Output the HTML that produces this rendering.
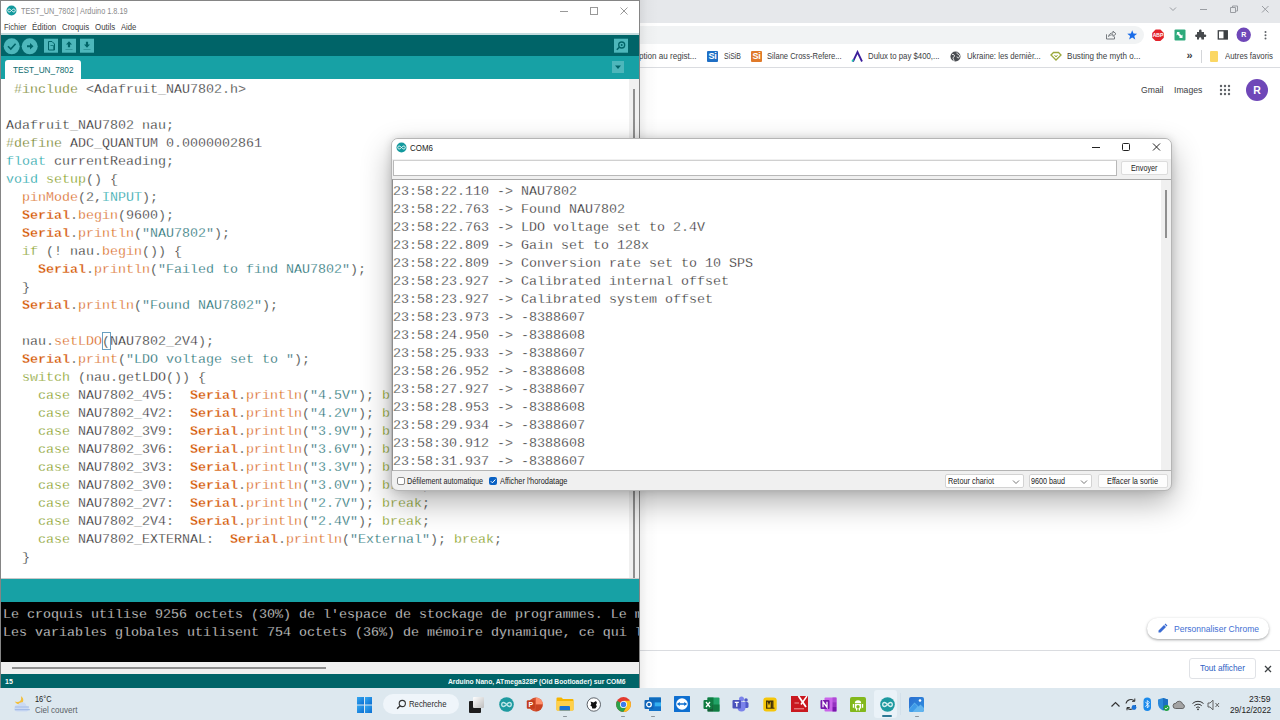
<!DOCTYPE html>
<html>
<head>
<meta charset="utf-8">
<title>Arduino IDE - Serial Monitor COM6</title>
<style>
*{box-sizing:border-box;margin:0;padding:0}
html,body{width:1280px;height:720px;overflow:hidden;background:#fff;font-family:"Liberation Sans",sans-serif;}
.abs{position:absolute}
#root{position:relative;width:1280px;height:720px;overflow:hidden;background:#fff}
/* chrome */
#chrome{left:0;top:0;width:1280px;height:688px;background:#fff}
#ctabs{left:0;top:0;width:1280px;height:23px;background:#e6e8eb}
#ctool{left:0;top:23px;width:1280px;height:22px;background:#fff}
#omni{left:100px;top:26px;width:1044px;height:18px;border-radius:9px;background:#f1f3f4}
#cbm{left:0;top:45px;width:1280px;height:23px;background:#fff;border-bottom:1px solid #dadce0}
.bm{position:absolute;top:50.500px;font-size:8.700px;color:#3c4043;white-space:nowrap}
/* arduino */
#ard{left:0;top:0;width:640px;height:688px;overflow:hidden;background:#fff;border-left:1px solid #858585;border-top:1px solid #858585;border-right:1px solid #858585}
.mono{font-family:"Liberation Mono",monospace;font-size:13.33px;line-height:18px;white-space:pre}
#code{left:5px;top:80px;color:#141414;-webkit-text-stroke:0.3px #fff}
.k1{color:#d35400}.k1b{color:#d35400;font-weight:bold}.k2{color:#00979c}.k3{color:#728e00}.k4{color:#728e00}.st{color:#005c5f}.pp{color:#5e6d03}
/* com */
#com{left:391px;top:138px;width:781px;height:353px;background:#f0f0f0;border:1px solid #b5b5b5;border-radius:7px;box-shadow:0 12px 30px rgba(0,0,0,0.30),0 0 8px rgba(0,0,0,0.14);overflow:hidden}
#comlog{left:1px;top:44px;color:#141414;-webkit-text-stroke:0.3px #fff}
/* taskbar */
#task{left:0;top:688px;width:1280px;height:32px;background:#dde8ef}
</style>
</head>
<body>
<div id="root">

<!-- CHROME -->
<div id="chrome" class="abs">
  <div id="ctabs" class="abs"></div>
  <div id="ctool" class="abs"></div>
  <div id="omni" class="abs"></div>
  <div id="cbm" class="abs"></div>
  <!-- window controls -->
  <svg class="abs" style="left:1160px;top:2px" width="120" height="16" viewBox="0 0 120 16"><g stroke="#9a9da2" stroke-width="1" fill="none"><path d="M10 5.500l3 3 3-3"/><path d="M40 7.500h7"/><path d="M70.500 5.500h5v5h-5z M72.500 5.500v-1.500h5v5h-2"/><path d="M102 4l6.500 6.500m0-6.500l-6.500 6.500"/></g></svg>
  <!-- toolbar icons -->
  <svg class="abs" style="left:1100px;top:25px" width="180" height="20" viewBox="0 0 180 20">
    <g fill="none" stroke="#6a6e73" stroke-width="0.900"><path d="M6.500 9.300v4.700h8v-2.500"/><path d="M8.500 11.500c.5-2.500 2-3.500 4.500-3.500v-1.800l3 2.600-3 2.600v-1.700c-2 0-3.200.6-4.500 1.800z"/></g>
    <path d="M32.20 5.20L33.49 8.62L37.15 8.79L34.29 11.08L35.26 14.61L32.20 12.60L29.14 14.61L30.11 11.08L27.25 8.79L30.91 8.62z" fill="#1a6ce8"/>
    <path d="M55.600 4.500h4.800l3.400 3.400v4.800l-3.400 3.400h-4.800l-3.400-3.400v-4.800z" fill="#e3232c"/>
    <text x="58" y="12.300" font-family="Liberation Sans" font-size="5" font-weight="bold" fill="#fff" text-anchor="middle">ABP</text>
    <rect x="74.500" y="4.500" width="11" height="11" rx="1" fill="#2eaa7c"/>
    <path d="M77 7h3l-1 1 2.500 2.500 1-1v3.500h-3.500l1-1-2.500-2.500-1 1z" fill="#fff"/>
    <path transform="translate(0.500,-1)" d="M96.500 8h2v-1.200a1.300 1.300 0 0 1 2.600 0v1.200h2.400v2.400h1a1.300 1.300 0 0 1 0 2.600h-1v2.500h-2.600v-1a1.200 1.200 0 0 0-2.400 0v1h-2v-2.500h-.6a1.300 1.300 0 0 1 0-2.600h.6z" fill="#46494d"/>
    <rect x="118.300" y="5.800" width="9" height="8.200" fill="none" stroke="#3c4043" stroke-width="1.300"/><rect x="123.500" y="5.800" width="3.800" height="8.200" fill="#3c4043"/>
    <circle cx="143.700" cy="9.800" r="7.200" fill="#6f47b8"/>
    <text x="143.700" y="12.300" font-family="Liberation Sans" font-size="7" font-weight="bold" fill="#fff" text-anchor="middle">R</text>
    <g fill="#5f6368"><circle cx="165.500" cy="7" r="1"/><circle cx="165.500" cy="10.300" r="1"/><circle cx="165.500" cy="13.600" r="1"/></g>
  </svg>
  <!-- bookmarks -->
  <div class="bm" style="transform-origin:0 50%;transform:scaleX(0.9300);left:638.5px">ption au regist...</div>
  <div class="abs" style="left:707px;top:51px;width:11px;height:11px;background:#1f6fc5;border-radius:1px;color:#fff;font-size:9px;font-weight:bold;line-height:11px;text-align:center;letter-spacing:-0.3px">Si</div>
  <div class="bm" style="transform-origin:0 50%;transform:scaleX(0.8000);left:723.5px">SiSiB</div>
  <div class="abs" style="left:751px;top:51px;width:11px;height:11px;background:#e07a2a;border-radius:1px;color:#fff;font-size:9px;font-weight:bold;line-height:11px;text-align:center;letter-spacing:-0.3px">Si</div>
  <div class="bm" style="transform-origin:0 50%;transform:scaleX(0.8717);left:767px">Silane Cross-Refere...</div>
  <svg class="abs" style="left:851px;top:50px" width="13" height="13" viewBox="0 0 13 13"><path d="M2 11.500l4.500-9.500 4.500 9.500" fill="none" stroke="#3b1e9a" stroke-width="1.800"/><path d="M1 11.500l1.500-2" stroke="#21c9b0" stroke-width="1.600"/></svg>
  <div class="bm" style="transform-origin:0 50%;transform:scaleX(0.8973);left:868.4px">Dulux to pay $400,...</div>
  <svg class="abs" style="left:950px;top:51px" width="11" height="11" viewBox="0 0 11 11"><circle cx="5.500" cy="5.500" r="5" fill="#4a4d51"/><path d="M2 3.500c1.500-.5 2.500.5 2.500 1.500s-1.500 1-1.500 2 1 1.500 1 3M7 1.500c-.5 1 .5 1.500 1.500 2s1.500 2 .5 3-2 0-2-1" stroke="#fff" stroke-width="0.900" fill="none"/></svg>
  <div class="bm" style="transform-origin:0 50%;transform:scaleX(0.8965);left:966.8px">Ukraine: les dernièr...</div>
  <svg class="abs" style="left:1050px;top:51px" width="12" height="11" viewBox="0 0 12 11"><path d="M1 4l2.500-2.500h5l2.500 2.500-5 5z" fill="none" stroke="#9aa83a" stroke-width="1.300"/><path d="M4.500 4l1.500 2 1.500-2" fill="none" stroke="#9aa83a" stroke-width="1"/></svg>
  <div class="bm" style="transform-origin:0 50%;transform:scaleX(0.9280);left:1067px">Busting the myth o...</div>
  <div class="abs" style="left:1186.500px;top:48.500px;font-size:11px;color:#3c4043;font-weight:bold">»</div>
  <div class="abs" style="left:1201px;top:50px;width:1px;height:13px;background:#d4d6d9"></div>
  <div class="abs" style="left:1210px;top:51px;width:8px;height:11px;background:#fbd764;border-radius:1px"></div>
  <div class="bm" style="transform-origin:0 50%;transform:scaleX(0.9038);left:1225px">Autres favoris</div>
  <!-- page -->
  <div class="abs" style="transform-origin:0 50%;transform:scaleX(0.9190);left:1141.200px;top:84px;font-size:9.400px;color:#3c4043;white-space:nowrap">Gmail</div>
  <div class="abs" style="transform-origin:0 50%;transform:scaleX(0.9203);left:1173.700px;top:84px;font-size:9.400px;color:#3c4043;white-space:nowrap">Images</div>
  <svg class="abs" style="left:1219px;top:84px" width="12" height="12" viewBox="0 0 12 12"><g fill="#5f6368"><circle cx="2" cy="2" r="1.200"/><circle cx="6" cy="2" r="1.200"/><circle cx="10" cy="2" r="1.200"/><circle cx="2" cy="6" r="1.200"/><circle cx="6" cy="6" r="1.200"/><circle cx="10" cy="6" r="1.200"/><circle cx="2" cy="10" r="1.200"/><circle cx="6" cy="10" r="1.200"/><circle cx="10" cy="10" r="1.200"/></g></svg>
  <div class="abs" style="left:1246px;top:79px;width:22px;height:22px;border-radius:11px;background:#6f47b8;color:#fff;font-size:10.500px;font-weight:bold;text-align:center;line-height:22px">R</div>
  <!-- customize -->
  <div class="abs" style="left:1147px;top:618px;width:122px;height:21px;border-radius:11px;background:#fff;box-shadow:0 1px 3px rgba(60,64,67,0.35),0 1px 2px rgba(60,64,67,0.15)"></div>
  <svg class="abs" style="left:1157px;top:623px" width="11" height="11" viewBox="0 0 11 11"><path d="M1.500 9.500v-2l5.500-5.500 2 2-5.500 5.500z M7.600 1.400l.8-.8 2 2-.8.800z" fill="#3b6cd4"/></svg>
  <div class="abs" style="transform-origin:0 50%;transform:scaleX(0.9299);left:1173.700px;top:623.500px;font-size:9.200px;color:#3f6fd3;white-space:nowrap">Personnaliser Chrome</div>
  <!-- download bar -->
  <div class="abs" style="left:0;top:650px;width:1280px;height:1px;background:#dadce0"></div>
  <div class="abs" style="left:1189px;top:658px;width:67px;height:21px;border:1px solid #e0e2e6;border-radius:3px"></div><div class="abs" style="transform-origin:0 50%;transform:scaleX(0.9020);left:1200px;top:663px;font-size:9.200px;color:#2f62c4;white-space:nowrap">Tout afficher</div>
  <svg class="abs" style="left:1263px;top:664px" width="10" height="10" viewBox="0 0 10 10"><path d="M2 2l6 6m0-6l-6 6" stroke="#3c4043" stroke-width="1.300" fill="none"/></svg>
  <!-- left shadow from arduino window -->
  <div class="abs" style="left:640px;top:0;width:18px;height:688px;background:linear-gradient(to right,rgba(0,0,0,0.07),rgba(0,0,0,0.02) 40%,rgba(0,0,0,0))"></div>
</div>

<!-- ARDUINO -->
<div id="ard" class="abs">
  <!-- title -->
  <svg class="abs" style="left:5px;top:4px" width="11" height="11" viewBox="0 0 11 11"><circle cx="5.5" cy="5.5" r="5" fill="#12999d"/><path d="M1.8 5.5c0-1 .7-1.5 1.4-1.5 1.5 0 3.1 3 4.6 3 .7 0 1.4-.5 1.4-1.5S8.500 4 7.800 4C6.300 4 4.700 7 3.200 7 2.500 7 1.800 6.500 1.800 5.500z" fill="none" stroke="#fff" stroke-width="0.9"/></svg>
  <div class="abs" style="transform-origin:0 50%;transform:scaleX(0.8104);left:20.300px;top:4.500px;font-size:9px;color:#8a8a8a;white-space:nowrap">TEST_UN_7802 | Arduino 1.8.19</div>
  <!-- window controls -->
  <svg class="abs" style="left:555px;top:4px" width="80" height="12" viewBox="0 0 80 12"><g stroke="#999" stroke-width="1" fill="none"><path d="M4 6.500h8"/><rect x="34.500" y="2.500" width="7" height="7"/><path d="M64.500 2.500l7 7m0-7l-7 7"/></g></svg>
  <!-- menu -->
  <div class="abs" style="transform-origin:0 50%;transform:scaleX(0.8366);left:2.8px;top:20.500px;font-size:9px;color:#404040;white-space:nowrap">Fichier</div><div class="abs" style="transform-origin:0 50%;transform:scaleX(0.8826);left:31.0px;top:20.500px;font-size:9px;color:#404040;white-space:nowrap">Édition</div><div class="abs" style="transform-origin:0 50%;transform:scaleX(0.8770);left:61.0px;top:20.500px;font-size:9px;color:#404040;white-space:nowrap">Croquis</div><div class="abs" style="transform-origin:0 50%;transform:scaleX(0.8777);left:94.0px;top:20.500px;font-size:9px;color:#404040;white-space:nowrap">Outils</div><div class="abs" style="transform-origin:0 50%;transform:scaleX(0.8493);left:120.0px;top:20.500px;font-size:9px;color:#404040;white-space:nowrap">Aide</div>
  <div class="abs" style="left:0;top:32px;width:638px;height:2px;background:#c4dcde"></div>
  <!-- toolbar -->
  <div class="abs" style="left:0;top:34px;width:638px;height:22px;background:#006468"></div>
  <div class="abs" style="left:0;top:55px;width:638px;height:23px;background:#17a1a5"></div>
  <!-- toolbar buttons -->
  <svg class="abs" style="left:0;top:34px" width="638" height="22" viewBox="0 0 638 22">
    <g fill="#4db7bb">
      <circle cx="10.700" cy="11.300" r="8"/><circle cx="28.700" cy="11.300" r="8"/>
      <rect x="43" y="3.700" width="14" height="14"/><rect x="61" y="3.700" width="14" height="14"/><rect x="79" y="3.700" width="14" height="14"/>
      <rect x="613" y="3.700" width="14" height="14" fill="#4db7bb"/>
    </g>
    <g fill="none" stroke="#006468" stroke-width="1.600">
      <path d="M7 11.300l2.800 2.800 4.800-5.400"/>
    </g>
    <g fill="#006468">
      <path d="M26 10.300h3v-2.300l3.500 3.300-3.500 3.300v-2.300h-3z"/>
      <path d="M68 6.300l3 3.300h-1.900v2.700h-2.200v-2.700h-1.900z"/><rect x="64.500" y="14.200" width="7" height="0.700" opacity="0.500"/>
      <path d="M86 12.800l3-3.300h-1.900v-2.700h-2.200v2.700h-1.900z"/><rect x="82.500" y="14.200" width="7" height="0.700" opacity="0.500"/>
    </g>
    <g fill="none" stroke="#006468" stroke-width="1">
      <path d="M47.500 6.500h3.500l2.500 2.500v6h-6z"/><path d="M49.500 10.500h3v4.500" opacity="0.700"/>
      <circle cx="620.700" cy="10" r="3" stroke-width="1.300"/><path d="M618.300 12.300l-2.500 2.500" stroke-width="1.600"/>
    </g>
    <circle cx="620.700" cy="10" r="1" fill="#006468"/>
  </svg>
  <!-- tab -->
  <div class="abs" style="left:4px;top:59px;width:76px;height:19px;background:#fff;border-radius:3px 3px 0 0"></div>
  <div class="abs" style="transform-origin:0 50%;transform:scaleX(0.9160);left:12px;top:64px;font-size:9px;color:#0d6b6e;white-space:nowrap">TEST_UN_7802</div>
  <div class="abs" style="left:611px;top:60px;width:12px;height:12px;background:#4db7bb"></div>
  <svg class="abs" style="left:611px;top:60px" width="12" height="12"><path d="M3 4.500h6l-3 3.500z" fill="#006468"/></svg>
  <!-- editor scrollbar -->
  <div class="abs" style="left:628px;top:78px;width:10px;height:500px;background:#f0f0f0"></div>
  <div class="abs" style="left:632px;top:88px;width:2px;height:490px;background:#8f8f8f"></div>
  <!-- code -->
  <div id="code" class="abs mono"><span class="pp"> #include</span> &lt;Adafruit_NAU7802.h&gt;

Adafruit_NAU7802 nau;
<span class="pp">#define</span> ADC_QUANTUM 0.0000002861
<span class="k2">float</span> currentReading;
<span class="k2">void</span> <span class="k4">setup</span>() {
  <span class="k1">pinMode</span>(2,<span class="k2">INPUT</span>);
  <span class="k1b">Serial</span>.<span class="k1">begin</span>(9600);
  <span class="k1b">Serial</span>.<span class="k1">println</span>(<span class="st">"NAU7802"</span>);
  <span class="k4">if</span> (! nau.<span class="k1">begin</span>()) {
    <span class="k1b">Serial</span>.<span class="k1">println</span>(<span class="st">"Failed to find NAU7802"</span>);
  }
  <span class="k1b">Serial</span>.<span class="k1">println</span>(<span class="st">"Found NAU7802"</span>);

  nau.<span class="k1">setLDO</span>(NAU7802_2V4);
  <span class="k1b">Serial</span>.<span class="k1">print</span>(<span class="st">"LDO voltage set to "</span>);
  <span class="k4">switch</span> (nau.getLDO()) {
    <span class="k4">case</span> NAU7802_4V5:  <span class="k1b">Serial</span>.<span class="k1">println</span>(<span class="st">"4.5V"</span>); <span class="k4">break</span>;
    <span class="k4">case</span> NAU7802_4V2:  <span class="k1b">Serial</span>.<span class="k1">println</span>(<span class="st">"4.2V"</span>); <span class="k4">break</span>;
    <span class="k4">case</span> NAU7802_3V9:  <span class="k1b">Serial</span>.<span class="k1">println</span>(<span class="st">"3.9V"</span>); <span class="k4">break</span>;
    <span class="k4">case</span> NAU7802_3V6:  <span class="k1b">Serial</span>.<span class="k1">println</span>(<span class="st">"3.6V"</span>); <span class="k4">break</span>;
    <span class="k4">case</span> NAU7802_3V3:  <span class="k1b">Serial</span>.<span class="k1">println</span>(<span class="st">"3.3V"</span>); <span class="k4">break</span>;
    <span class="k4">case</span> NAU7802_3V0:  <span class="k1b">Serial</span>.<span class="k1">println</span>(<span class="st">"3.0V"</span>); <span class="k4">break</span>;
    <span class="k4">case</span> NAU7802_2V7:  <span class="k1b">Serial</span>.<span class="k1">println</span>(<span class="st">"2.7V"</span>); <span class="k4">break</span>;
    <span class="k4">case</span> NAU7802_2V4:  <span class="k1b">Serial</span>.<span class="k1">println</span>(<span class="st">"2.4V"</span>); <span class="k4">break</span>;
    <span class="k4">case</span> NAU7802_EXTERNAL:  <span class="k1b">Serial</span>.<span class="k1">println</span>(<span class="st">"External"</span>); <span class="k4">break</span>;
  }</div>
  <!-- cursor bracket box -->
  <div class="abs" style="left:101px;top:331px;width:9px;height:18px;border:1px solid #6a9fc0"></div>
  <!-- bottom -->
  <div class="abs" style="left:0;top:577px;width:638px;height:1px;background:#c8c8c8"></div>
  <div class="abs" style="left:0;top:578px;width:638px;height:23px;background:#17a1a5"></div>
  <div class="abs" style="left:0;top:601px;width:638px;height:60px;background:#000"></div>
  <div class="abs mono" style="left:2px;top:605px;color:#f0f0f0;-webkit-text-stroke:0.3px #000">Le croquis utilise 9256 octets (30%) de l'espace de stockage de programmes. Le m
Les variables globales utilisent 754 octets (36%) de mémoire dynamique, ce qui l</div>
  <div class="abs" style="left:0;top:661px;width:638px;height:12px;background:#f0f0f0"></div>
  <div class="abs" style="left:11px;top:666px;width:314px;height:2px;background:#8f8f8f"></div>
  <div class="abs" style="left:0;top:673px;width:638px;height:14px;background:#006468"></div>
  <div class="abs" style="left:4px;top:677px;font-size:7px;color:#fff;font-weight:bold">15</div>
  <div class="abs" style="transform-origin:0 50%;transform:scaleX(0.9574);left:447px;top:677px;font-size:7px;color:#f4fafa;font-weight:bold;white-space:nowrap">Arduino Nano, ATmega328P (Old Bootloader) sur COM6</div>
</div>

<!-- COM6 -->
<div id="com" class="abs">
  <!-- all coords relative to (392,139) -->
  <div class="abs" style="left:0;top:0;width:779px;height:20px;background:#fff"></div>
  <svg class="abs" style="left:4px;top:3px" width="11" height="11" viewBox="0 0 11 11"><circle cx="5.500" cy="5.500" r="5" fill="#12999d"/><path d="M1.800 5.500c0-1 .7-1.500 1.400-1.500 1.500 0 3.100 3 4.600 3 .7 0 1.400-.5 1.400-1.500S8.500 4 7.800 4C6.300 4 4.700 7 3.200 7 2.500 7 1.800 6.500 1.800 5.500z" fill="none" stroke="#fff" stroke-width="0.900"/></svg>
  <div class="abs" style="transform-origin:0 50%;transform:scaleX(0.9160);left:18.300px;top:3.700px;font-size:8.700px;color:#222;white-space:nowrap">COM6</div>
  <svg class="abs" style="left:698px;top:2.300px" width="76" height="12" viewBox="0 0 76 12"><g stroke="#222" stroke-width="1" fill="none"><path d="M2 6.500h8"/><rect x="32.500" y="2.500" width="7" height="7" rx="1"/><path d="M63 2.500l7 7m0-7l-7 7"/></g></svg>
  <!-- input -->
  <div class="abs" style="left:1px;top:21px;width:724px;height:16px;background:#fff;border:1px solid #b8b8b8;border-top-color:#d0d0d0"></div>
  <div class="abs" style="left:729px;top:22px;width:46.500px;height:14px;background:#fdfdfd;border:1px solid #dcdcdc;border-radius:2px"></div><div class="abs" style="transform-origin:0 50%;transform:scaleX(0.8706);left:739px;top:24px;font-size:8.300px;color:#222;white-space:nowrap">Envoyer</div>
  <!-- log -->
  <div class="abs" style="left:0;top:40px;width:779px;height:292px;background:#fff;border-top:1px solid #a9a9a9;border-left:1px solid #8d8d8d;border-bottom:1px solid #b4b4b4"></div>
  <div id="comlog" class="abs mono">23:58:22.110 -&gt; NAU7802
23:58:22.763 -&gt; Found NAU7802
23:58:22.763 -&gt; LDO voltage set to 2.4V
23:58:22.809 -&gt; Gain set to 128x
23:58:22.809 -&gt; Conversion rate set to 10 SPS
23:58:23.927 -&gt; Calibrated internal offset
23:58:23.927 -&gt; Calibrated system offset
23:58:23.973 -&gt; -8388607
23:58:24.950 -&gt; -8388608
23:58:25.933 -&gt; -8388607
23:58:26.952 -&gt; -8388608
23:58:27.927 -&gt; -8388607
23:58:28.953 -&gt; -8388608
23:58:29.934 -&gt; -8388607
23:58:30.912 -&gt; -8388608
23:58:31.937 -&gt; -8388607</div>
  <div class="abs" style="left:769px;top:41px;width:10px;height:290px;background:#f0f0f0"></div>
  <div class="abs" style="left:773px;top:51px;width:2px;height:48px;background:#8f8f8f"></div>
  <!-- bottom -->
  <div class="abs" style="left:4.500px;top:337.700px;width:8.500px;height:8.500px;background:#fff;border:1px solid #8a8a8a;border-radius:2px"></div>
  <div class="abs" style="transform-origin:0 50%;transform:scaleX(0.8672);left:15px;top:337px;font-size:8.300px;color:#222;white-space:nowrap">Défilement automatique</div>
  <div class="abs" style="left:96.700px;top:337.700px;width:8.500px;height:8.500px;background:#0b62c4;border-radius:2px"></div>
  <svg class="abs" style="left:97px;top:338px" width="8" height="8"><path d="M1.800 4.200l1.600 1.600 3-3.300" stroke="#fff" stroke-width="1" fill="none"/></svg>
  <div class="abs" style="transform-origin:0 50%;transform:scaleX(0.8916);left:107.700px;top:337px;font-size:8.300px;color:#222;white-space:nowrap">Afficher l'horodatage</div>
  <div class="abs" style="left:553px;top:335px;width:78.500px;height:13.500px;background:#fff;border:1px solid #d3d3d3;border-radius:2px"></div><div class="abs" style="transform-origin:0 50%;transform:scaleX(0.8825);left:556px;top:337px;font-size:8.300px;color:#222;white-space:nowrap">Retour chariot</div>
  <div class="abs" style="left:636.500px;top:335px;width:63px;height:13.500px;background:#fff;border:1px solid #d3d3d3;border-radius:2px"></div><div class="abs" style="transform-origin:0 50%;transform:scaleX(0.8666);left:639.300px;top:337px;font-size:8.300px;color:#222;white-space:nowrap">9600 baud</div>
  <svg class="abs" style="left:620px;top:340px" width="8" height="6"><path d="M1 1.500l3 3 3-3" stroke="#666" stroke-width="0.900" fill="none"/></svg>
  <svg class="abs" style="left:688px;top:340px" width="8" height="6"><path d="M1 1.500l3 3 3-3" stroke="#666" stroke-width="0.900" fill="none"/></svg>
  <div class="abs" style="left:705.700px;top:335px;width:70.500px;height:13.500px;background:#fdfdfd;border:1px solid #dcdcdc;border-radius:2px"></div><div class="abs" style="transform-origin:0 50%;transform:scaleX(0.8870);left:714.800px;top:337px;font-size:8.300px;color:#222;white-space:nowrap">Effacer la sortie</div>
</div>

<!-- TASKBAR -->
<div id="task" class="abs">
  <!-- coords relative to (0,688) -->
  <!-- weather -->
  <svg class="abs" style="left:11.500px;top:3.500px" width="22" height="22" viewBox="0 0 22 22">
    <circle cx="7" cy="8" r="4.300" fill="#f3bf3a"/><circle cx="5.200" cy="5.900" r="4" fill="#dde8ef"/>
    <path d="M5.500 19.500a3.300 3.300 0 0 1 .2-6.600 4.600 4.600 0 0 1 8.700.8 3 3 0 0 1 .4 5.800z" fill="#cbdaf3"/>
    <path d="M3 15h14M2.800 17.600h15" stroke="#a3bce8" stroke-width="1.100" fill="none"/>
  </svg>
  <div class="abs" style="transform-origin:0 50%;transform:scaleX(0.8684);left:34.500px;top:5.500px;font-size:8.500px;color:#222;white-space:nowrap">16°C</div>
  <div class="abs" style="transform-origin:0 50%;transform:scaleX(0.9264);left:34.500px;top:16.500px;font-size:8.700px;color:#5a5f66;white-space:nowrap">Ciel couvert</div>
  <!-- start -->
  <svg class="abs" style="left:357px;top:8.500px" width="15" height="16" viewBox="0 0 15 16"><defs><linearGradient id="wg" x1="0" y1="0" x2="1" y2="1"><stop offset="0" stop-color="#35a8f0"/><stop offset="1" stop-color="#0b6fd3"/></linearGradient></defs><g fill="url(#wg)"><rect x="0" y="0" width="7" height="7.500"/><rect x="8" y="0" width="7" height="7.500"/><rect x="0" y="8.500" width="7" height="7.500"/><rect x="8" y="8.500" width="7" height="7.500"/></g></svg>
  <!-- search -->
  <div class="abs" style="left:382.500px;top:5.700px;width:76px;height:20px;border-radius:10px;background:#eff5fa"></div>
  <svg class="abs" style="left:395.500px;top:11px" width="11" height="11" viewBox="0 0 11 11"><circle cx="6.300" cy="4.500" r="3.100" fill="none" stroke="#333" stroke-width="1.100"/><path d="M4.100 6.800l-3 3" stroke="#333" stroke-width="1.300"/></svg>
  <div class="abs" style="transform-origin:0 50%;transform:scaleX(0.8339);left:408.700px;top:11px;font-size:9.300px;color:#2b2b2b;white-space:nowrap">Recherche</div>
  <!-- task view -->
  <div class="abs" style="left:469px;top:12.500px;width:12px;height:12px;background:#1d1d1d;border-radius:1px"></div>
  <div class="abs" style="left:473px;top:9px;width:11px;height:11px;background:linear-gradient(135deg,#fff,#bdbdbd);border-radius:1px"></div>
  <!-- arduino -->
  <svg class="abs" style="left:498.500px;top:8.500px" width="15" height="15" viewBox="0 0 15 15"><circle cx="7.500" cy="7.500" r="7.300" fill="#1e9aa0"/><path d="M2.700 7.500c0-1.300.9-2 1.900-2 2 0 3.800 4 5.800 4 1 0 1.900-.7 1.900-2s-.9-2-1.900-2c-2 0-3.800 4-5.800 4-1 0-1.900-.7-1.900-2z" fill="none" stroke="#bfe6e8" stroke-width="1.300"/></svg>
  <!-- powerpoint -->
  <svg class="abs" style="left:526px;top:8.500px" width="17" height="15" viewBox="0 0 17 15"><circle cx="9.800" cy="7.500" r="7" fill="#d4502f"/><path d="M9.800 .5a7 7 0 0 1 7 7h-7z" fill="#ff8f6b"/><path d="M9.800 7.500h7a7 7 0 0 1-7 7z" fill="#c13b1b" opacity="0.600"/><rect x="0.800" y="3.200" width="8" height="8.600" rx="1" fill="#c43e1c"/><text x="4.800" y="10.200" font-family="Liberation Sans" font-weight="bold" font-size="7" fill="#fff" text-anchor="middle">P</text></svg>
  <!-- explorer -->
  <svg class="abs" style="left:556px;top:8px" width="18" height="16" viewBox="0 0 18 16"><path d="M0.500 2.500a1 1 0 0 1 1-1h4l1.500 1.500h9.500a1 1 0 0 1 1 1v9.500a1 1 0 0 1-1 1h-15a1 1 0 0 1-1-1z" fill="#f5b400"/><path d="M0.500 5h17v8.500a1 1 0 0 1-1 1h-15a1 1 0 0 1-1-1z" fill="#ffd04a"/><path d="M3.500 14.500v-3.500a1 1 0 0 1 1-1h8.500a1 1 0 0 1 1 1v3.500z" fill="#1c73d2"/></svg>
  <div class="abs" style="left:562.500px;top:27.500px;width:4px;height:1.500px;border-radius:1px;background:#8c949c"></div>
  <!-- gimp-like -->
  <svg class="abs" style="left:586px;top:8.500px" width="16" height="16" viewBox="0 0 16 16"><circle cx="7.800" cy="7.500" r="6.700" fill="#fff" stroke="#3a4048" stroke-width="0.800"/><path d="M4.500 4.500l3 1 2.500-1.500 1 2-1 1.500.8 2-1.500 2h-3l-.5-2-1.500-1 1-1.500z" fill="#111"/></svg>
  <!-- chrome -->
  <svg class="abs" style="left:615.500px;top:8.500px" width="15" height="15" viewBox="0 0 15 15"><circle cx="7.500" cy="7.500" r="7.400" fill="#e33b2e"/><path d="M7.500 7.500L1.100 3.800A7.400 7.400 0 0 0 7.500 14.900l3.200-5.500z" fill="#2ba24c"/><path d="M7.500 14.900A7.400 7.400 0 0 0 13.900 3.800H7.500l3.200 5.600z" fill="#fcc31e"/><circle cx="7.500" cy="7.500" r="3.500" fill="#fff"/><circle cx="7.500" cy="7.500" r="2.700" fill="#3b7ded"/></svg>
  <div class="abs" style="left:621px;top:27.500px;width:4px;height:1.500px;border-radius:1px;background:#8c949c"></div>
  <!-- outlook -->
  <svg class="abs" style="left:644px;top:8.500px" width="18" height="15" viewBox="0 0 18 15"><rect x="5" y="0.500" width="12" height="13.500" rx="1" fill="#1a82dc"/><rect x="5" y="0.500" width="12" height="5" fill="#0f6cbd"/><rect x="11" y="5.500" width="6" height="4" fill="#35b1f0"/><rect x="5" y="9.500" width="12" height="4.500" fill="#1273c9"/><rect x="0.500" y="3" width="9" height="9" rx="1" fill="#0f64b8"/><circle cx="5" cy="7.500" r="2.300" fill="none" stroke="#fff" stroke-width="1.300"/></svg>
  <div class="abs" style="left:650.500px;top:27.500px;width:4px;height:1.500px;border-radius:1px;background:#8c949c"></div>
  <!-- teamviewer -->
  <svg class="abs" style="left:674px;top:8px" width="16" height="16" viewBox="0 0 16 16"><rect width="16" height="16" rx="0.500" fill="#0e6fd0"/><circle cx="8" cy="8" r="5.800" fill="#fff"/><path d="M2.800 8l3-2v1.300h4.400V6l3 2-3 2V8.700H5.800V10z" fill="#0e6fd0"/></svg>
  <!-- excel -->
  <svg class="abs" style="left:703px;top:8.500px" width="17" height="15" viewBox="0 0 17 15"><rect x="4.500" y="0.500" width="12" height="14" rx="1" fill="#21a366"/><rect x="4.500" y="0.500" width="6" height="7" fill="#107c41"/><rect x="10.500" y="7.500" width="6" height="7" fill="#107c41"/><rect x="4.500" y="7.500" width="6" height="7" fill="#185c37"/><rect x="0.500" y="3" width="9" height="9" rx="1" fill="#107c41"/><path d="M3 5l4 5m0-5l-4 5" stroke="#fff" stroke-width="1.300"/></svg>
  <!-- teams -->
  <svg class="abs" style="left:732px;top:8px" width="17" height="16" viewBox="0 0 17 16"><circle cx="14" cy="4" r="1.800" fill="#5059c9"/><circle cx="9.500" cy="3" r="2.500" fill="#7b83eb"/><rect x="11.500" y="6" width="5" height="6" rx="1.500" fill="#5059c9"/><path d="M5 6h8.500v5.500a4 4 0 0 1-8 0z" fill="#7b83eb"/><rect x="0.500" y="4" width="8.500" height="8.500" rx="1" fill="#4b53bc"/><path d="M2.800 6.300h4M4.800 6.300v4.500" stroke="#fff" stroke-width="1.300"/></svg>
  <!-- yellow -->
  <svg class="abs" style="left:763px;top:8.500px" width="14" height="15" viewBox="0 0 14 15"><rect x="0.300" y="0.500" width="13.400" height="14" rx="3" fill="#f5c60a"/><path d="M3.700 11V4.200h1.500l.8 2.300.8-2.300h1.500V11M8.300 11V4.200h1.500V11" fill="none" stroke="#3b2b07" stroke-width="1.300"/><path d="M3 11.200h8.500" stroke="#3b2b07" stroke-width="1"/></svg>
  <!-- foxit -->
  <svg class="abs" style="left:791px;top:7.700px" width="17" height="16.500" viewBox="0 0 17 16.500"><rect width="17" height="16.500" fill="#c9181f"/><path d="M7.500 0l7.500 11" stroke="#fff" stroke-width="1.800" fill="none"/><path d="M16 0l-6 8.500" stroke="#fff" stroke-width="1.500" fill="none"/><path d="M3.500 7h4.500M3 12.800h10" stroke="#ee9a9a" stroke-width="1"/></svg>
  <!-- onenote -->
  <svg class="abs" style="left:820px;top:8.500px" width="17" height="15" viewBox="0 0 17 15"><rect x="4.500" y="0.500" width="12" height="14" rx="1" fill="#ca64ea"/><rect x="12.500" y="0.500" width="4" height="4.700" fill="#ae4bd5"/><rect x="12.500" y="5.200" width="4" height="4.700" fill="#9332bf"/><rect x="12.500" y="9.900" width="4" height="4.600" fill="#7719aa"/><rect x="0.500" y="3" width="9" height="9" rx="1" fill="#7719aa"/><path d="M3 10.200V4.800l4 5.400V4.800" fill="none" stroke="#fff" stroke-width="1.300"/></svg>
  <!-- android -->
  <svg class="abs" style="left:850px;top:8.500px" width="16" height="15.500" viewBox="0 0 16 15.500"><rect width="16" height="15.500" rx="2" fill="#82b81c"/><path d="M4.800 6.200a3.200 3 0 0 1 6.400 0z M4.800 6.900h6.400v4.600h-1.200v2h-1.300v-2h-1.400v2H6v-2H4.800z M2.800 7h1.200v3.800H2.800z M12 7h1.200v3.800H12z" fill="#fff"/><circle cx="8" cy="9.700" r="1.700" fill="#82b81c"/></svg>
  <!-- arduino active -->
  <div class="abs" style="left:874px;top:2px;width:23px;height:28px;border-radius:3px;background:#eaf2f8"></div>
  <svg class="abs" style="left:879.500px;top:8.500px" width="15" height="15" viewBox="0 0 15 15"><circle cx="7.500" cy="7.500" r="7.300" fill="#1e9aa0"/><path d="M2.700 7.500c0-1.300.9-2 1.900-2 2 0 3.800 4 5.800 4 1 0 1.900-.7 1.900-2s-.9-2-1.900-2c-2 0-3.800 4-5.800 4-1 0-1.900-.7-1.900-2z" fill="none" stroke="#d7eff0" stroke-width="1.300"/></svg>
  <div class="abs" style="left:882px;top:27.300px;width:10px;height:2px;border-radius:1px;background:#2e7896"></div>
  <div class="abs" style="left:900px;top:5px;width:1px;height:22px;background:#d3e0ea"></div>
  <!-- photos -->
  <svg class="abs" style="left:909px;top:8.500px" width="15" height="15" viewBox="0 0 15 15"><defs><linearGradient id="pg" x1="0" y1="0" x2="1" y2="1"><stop offset="0" stop-color="#2a6fd0"/><stop offset="1" stop-color="#2f8fe0"/></linearGradient></defs><rect width="15" height="15" rx="2" fill="url(#pg)"/><path d="M0 12l5.500-6.500 4 4 2-2 3.500 3.500v2a2 2 0 0 1-2 2h-11a2 2 0 0 1-2-2z" fill="#61b4ee"/><path d="M0 13l5.500-6.500 3 3-5 5.500h-1.500a2 2 0 0 1-2-2z" fill="#3f9be8"/><circle cx="11" cy="3.500" r="1.300" fill="#fff"/></svg>
  <div class="abs" style="left:914.500px;top:27.500px;width:4px;height:1.500px;border-radius:1px;background:#8c949c"></div>
  <!-- tray -->
  <svg class="abs" style="left:1108px;top:8px" width="115" height="17" viewBox="0 0 115 17">
    <path d="M3.500 10.500l4-4 4 4" fill="none" stroke="#333" stroke-width="1.200"/>
    <g fill="none" stroke="#333" stroke-width="1.100"><path d="M18 7.500a5 5 0 0 1 8.500-2.500M27.500 9a5 5 0 0 1-8.500 2.800"/><path d="M26.800 2.500v2.800h-2.800M19 14.300v-2.800h2.800" stroke-width="1"/></g><circle cx="26" cy="11.500" r="2.400" fill="#1a73d9"/>
    <rect x="35.500" y="1.500" width="7.500" height="13.500" rx="3.750" fill="#1b8aeb"/><path d="M37.300 5.800l4 4.200-2 2V4.500l2 2-4 4.200" fill="none" stroke="#fff" stroke-width="0.800"/>
    <path d="M55 2l5 1.500v4c0 3.500-2 5.500-5 7-3-1.500-5-3.500-5-7v-4z" fill="#2b88d8"/><path d="M55 2l5 1.500v4c0 3.500-2 5.500-5 7z" fill="#1b6ec2"/><circle cx="58.500" cy="12" r="3" fill="#22a045"/><path d="M57 12l1.100 1.100 1.900-2.100" stroke="#fff" stroke-width="0.800" fill="none"/>
    <path d="M67.500 12.500a2.600 2.600 0 0 1 .3-5.200 3.600 3.600 0 0 1 6.800.9 2.200 2.200 0 0 1 .2 4.300z" fill="#a3a3a3" stroke="#5a5a5a" stroke-width="0.900"/>
    <g fill="none" stroke="#333" stroke-width="1"><path d="M84.500 7.500a8 8 0 0 1 11 0"/><path d="M86.300 9.700a5.300 5.300 0 0 1 7.400 0"/><path d="M88.200 11.700a2.600 2.600 0 0 1 3.600 0"/></g><circle cx="90" cy="13.300" r="0.900" fill="#333"/>
    <g fill="none" stroke="#555" stroke-width="0.900"><path d="M100 7h2l3-2.800v9.600l-3-2.800h-2z"/><path d="M107.500 7l3.500 4m0-4l-3.500 4"/></g>
  </svg>
  <div class="abs" style="transform-origin:0 50%;transform:scaleX(1.0103);left:1248.500px;top:6px;font-size:8.500px;color:#222;white-space:nowrap">23:59</div>
  <div class="abs" style="transform-origin:0 50%;transform:scaleX(0.9636);left:1229.500px;top:16.500px;font-size:8.500px;color:#222;white-space:nowrap">29/12/2022</div>
</div>

</div>
</body>
</html>
